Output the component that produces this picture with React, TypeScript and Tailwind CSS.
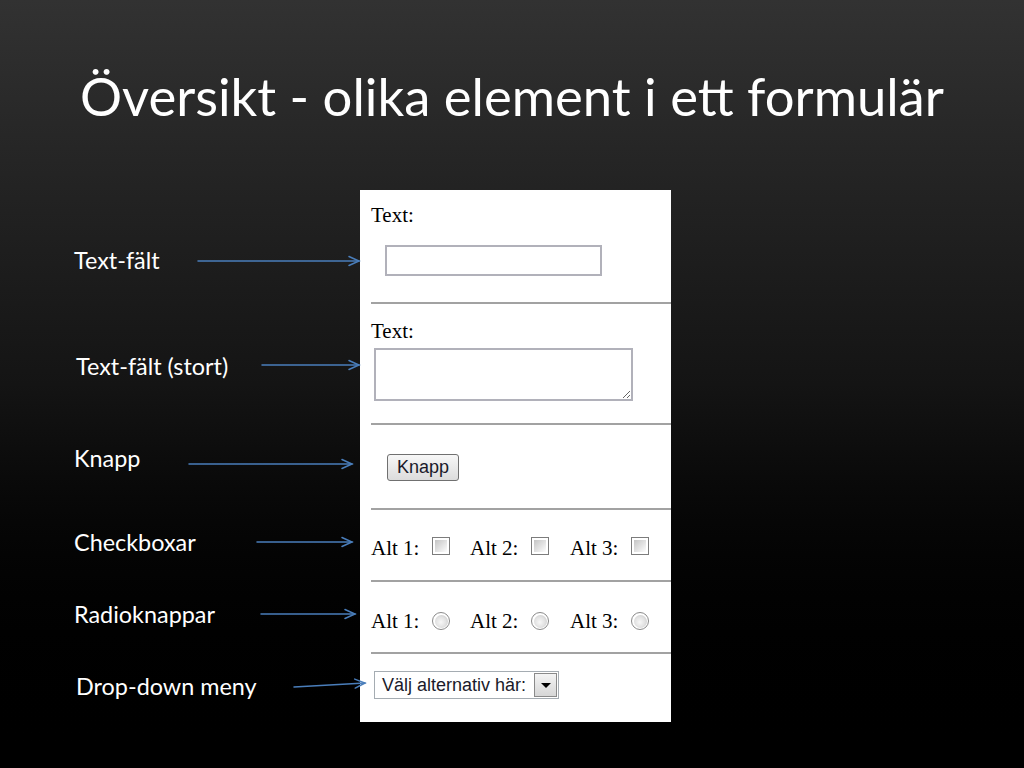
import { FC } from "react";

const labels = [
  { text: "Text-fält", mt: "mt-[56px]", ml: "ml-0" },
  { text: "Text-fält (stort)", mt: "mt-[78px]", ml: "ml-[2px]" },
  { text: "Knapp", mt: "mt-[64px]", ml: "ml-0" },
  { text: "Checkboxar", mt: "mt-[56px]", ml: "ml-0" },
  { text: "Radioknappar", mt: "mt-[44px]", ml: "ml-0" },
  { text: "Drop-down meny", mt: "mt-[44px]", ml: "ml-[2px]" },
];

// arrows from labels to the form: [x1, y1, x2, y2]
const arrows = [
  [198, 261, 359, 261],
  [262, 365, 359, 365],
  [189, 464, 352, 464],
  [257, 542, 352, 542],
  [261, 614, 355, 614],
  [294, 687, 365, 683],
];

const Arrow: FC<{ a: number[] }> = ({ a }) => {
  const [x1, y1, x2, y2] = a;
  const ang = Math.atan2(y2 - y1, x2 - x1);
  const len = 11;
  const spread = 0.42;
  const p1 = [x2 - len * Math.cos(ang - spread), y2 - len * Math.sin(ang - spread)];
  const p2 = [x2 - len * Math.cos(ang + spread), y2 - len * Math.sin(ang + spread)];
  return (
    <g stroke="#4a7ebb" strokeWidth={1.5} fill="none" strokeLinecap="round">
      <line x1={x1} y1={y1} x2={x2} y2={y2} />
      <polyline points={`${p1[0]},${p1[1]} ${x2},${y2} ${p2[0]},${p2[1]}`} />
    </g>
  );
};

const Rule = () => <div className="h-[2px] bg-[#a2a2a2]" />;

const Check = () => (
  <span className="block w-[18px] h-[18px] border-[1.5px] border-[#7c7c7c] bg-white p-[2px]">
    <span className="block w-full h-full bg-linear-to-br from-[#c4c4c4] to-[#fdfdfd]" />
  </span>
);

const Radio = () => (
  <span className="block w-[18px] h-[18px] rounded-full border-[1.5px] border-[#8a8a8a] bg-white p-[1.5px]">
    <span className="block w-full h-full rounded-full bg-radial-[at_45%_55%] from-[#f8f8f8] via-[#e2e2e2] to-[#c2c2c2]" />
  </span>
);

const Group: FC<{ label: string; w: string; children: React.ReactNode; mt: string }> = ({
  label,
  w,
  children,
  mt,
}) => (
  <div className={`flex items-start ${w}`}>
    <span className="w-[61px] shrink-0">{label}</span>
    <span className={mt}>{children}</span>
  </div>
);

export default function App() {
  return (
    <div className="relative w-[1024px] h-[768px] overflow-hidden bg-linear-to-b from-[#323232] via-[#141414] to-[#000000]">
      <h1 className="pt-[64px] pl-[80px] text-white text-[52.6px] leading-[64px] font-normal font-['Lato',sans-serif]">
        Översikt - olika element i ett formulär
      </h1>

      <div className="flex items-start mt-[62px]">
        <div className="w-[360px] pl-[74px] flex flex-col text-white text-[23.4px] leading-[28px] font-['Lato',sans-serif]">
          {labels.map((l) => (
            <div key={l.text} className={`${l.mt} ${l.ml}`}>
              {l.text}
            </div>
          ))}
        </div>

        <div className="w-[311px] h-[532px] bg-white pl-[11px] pt-[14px] text-black text-[21px] leading-[23px] font-['Liberation_Serif',serif]">
          <div>Text:</div>
          <input
            type="text"
            className="block mt-[18px] ml-[14px] w-[217px] h-[31px] border-2 border-[#b1b1ba] bg-white outline-none"
          />
          <div className="mt-[26px]">
            <Rule />
          </div>

          <div className="mt-[16px]">Text:</div>
          <textarea className="block mt-[5px] ml-[3px] w-[259px] h-[53px] border-2 border-[#b1b1ba] bg-white outline-none" />
          <div className="mt-[22px]">
            <Rule />
          </div>

          <button className="block mt-[29px] ml-[16px] w-[72px] h-[27px] rounded-[3px] border border-[#707070] bg-linear-to-b from-[#f7f7f7] to-[#dcdcdc] text-[18px] leading-[25px] text-[#1a1a2a] font-['Liberation_Sans',Arial,sans-serif]">
            Knapp
          </button>
          <div className="mt-[27px]">
            <Rule />
          </div>

          <div className="mt-[27px] flex">
            <Group label="Alt 1:" w="w-[99px]" mt="mt-0">
              <Check />
            </Group>
            <Group label="Alt 2:" w="w-[100px]" mt="mt-0">
              <Check />
            </Group>
            <Group label="Alt 3:" w="w-[90px]" mt="mt-0">
              <Check />
            </Group>
          </div>
          <div className="mt-[20px]">
            <Rule />
          </div>

          <div className="mt-[28px] flex">
            <Group label="Alt 1:" w="w-[99px]" mt="mt-[2px]">
              <Radio />
            </Group>
            <Group label="Alt 2:" w="w-[100px]" mt="mt-[2px]">
              <Radio />
            </Group>
            <Group label="Alt 3:" w="w-[90px]" mt="mt-[2px]">
              <Radio />
            </Group>
          </div>
          <div className="mt-[19px]">
            <Rule />
          </div>

          <div className="mt-[17px] ml-[3px] w-[185px] h-[28px] border border-[#a5acb2] bg-white flex items-center justify-between pl-[7px] pr-px text-[18px] text-[#1a1a2a] font-['Liberation_Sans',Arial,sans-serif]">
            <span>Välj alternativ här:</span>
            <span className="w-[23px] h-[24px] border border-[#8a8a8a] bg-linear-to-b from-[#f4f4f4] to-[#d6d6d6] flex items-center justify-center">
              <span className="w-0 h-0 border-l-[5px] border-r-[5px] border-t-[5px] border-l-transparent border-r-transparent border-t-black" />
            </span>
          </div>
        </div>
      </div>

      <svg className="absolute inset-0 pointer-events-none" width={1024} height={768}>
        {arrows.map((a, i) => (
          <Arrow key={i} a={a} />
        ))}
      </svg>
    </div>
  );
}
